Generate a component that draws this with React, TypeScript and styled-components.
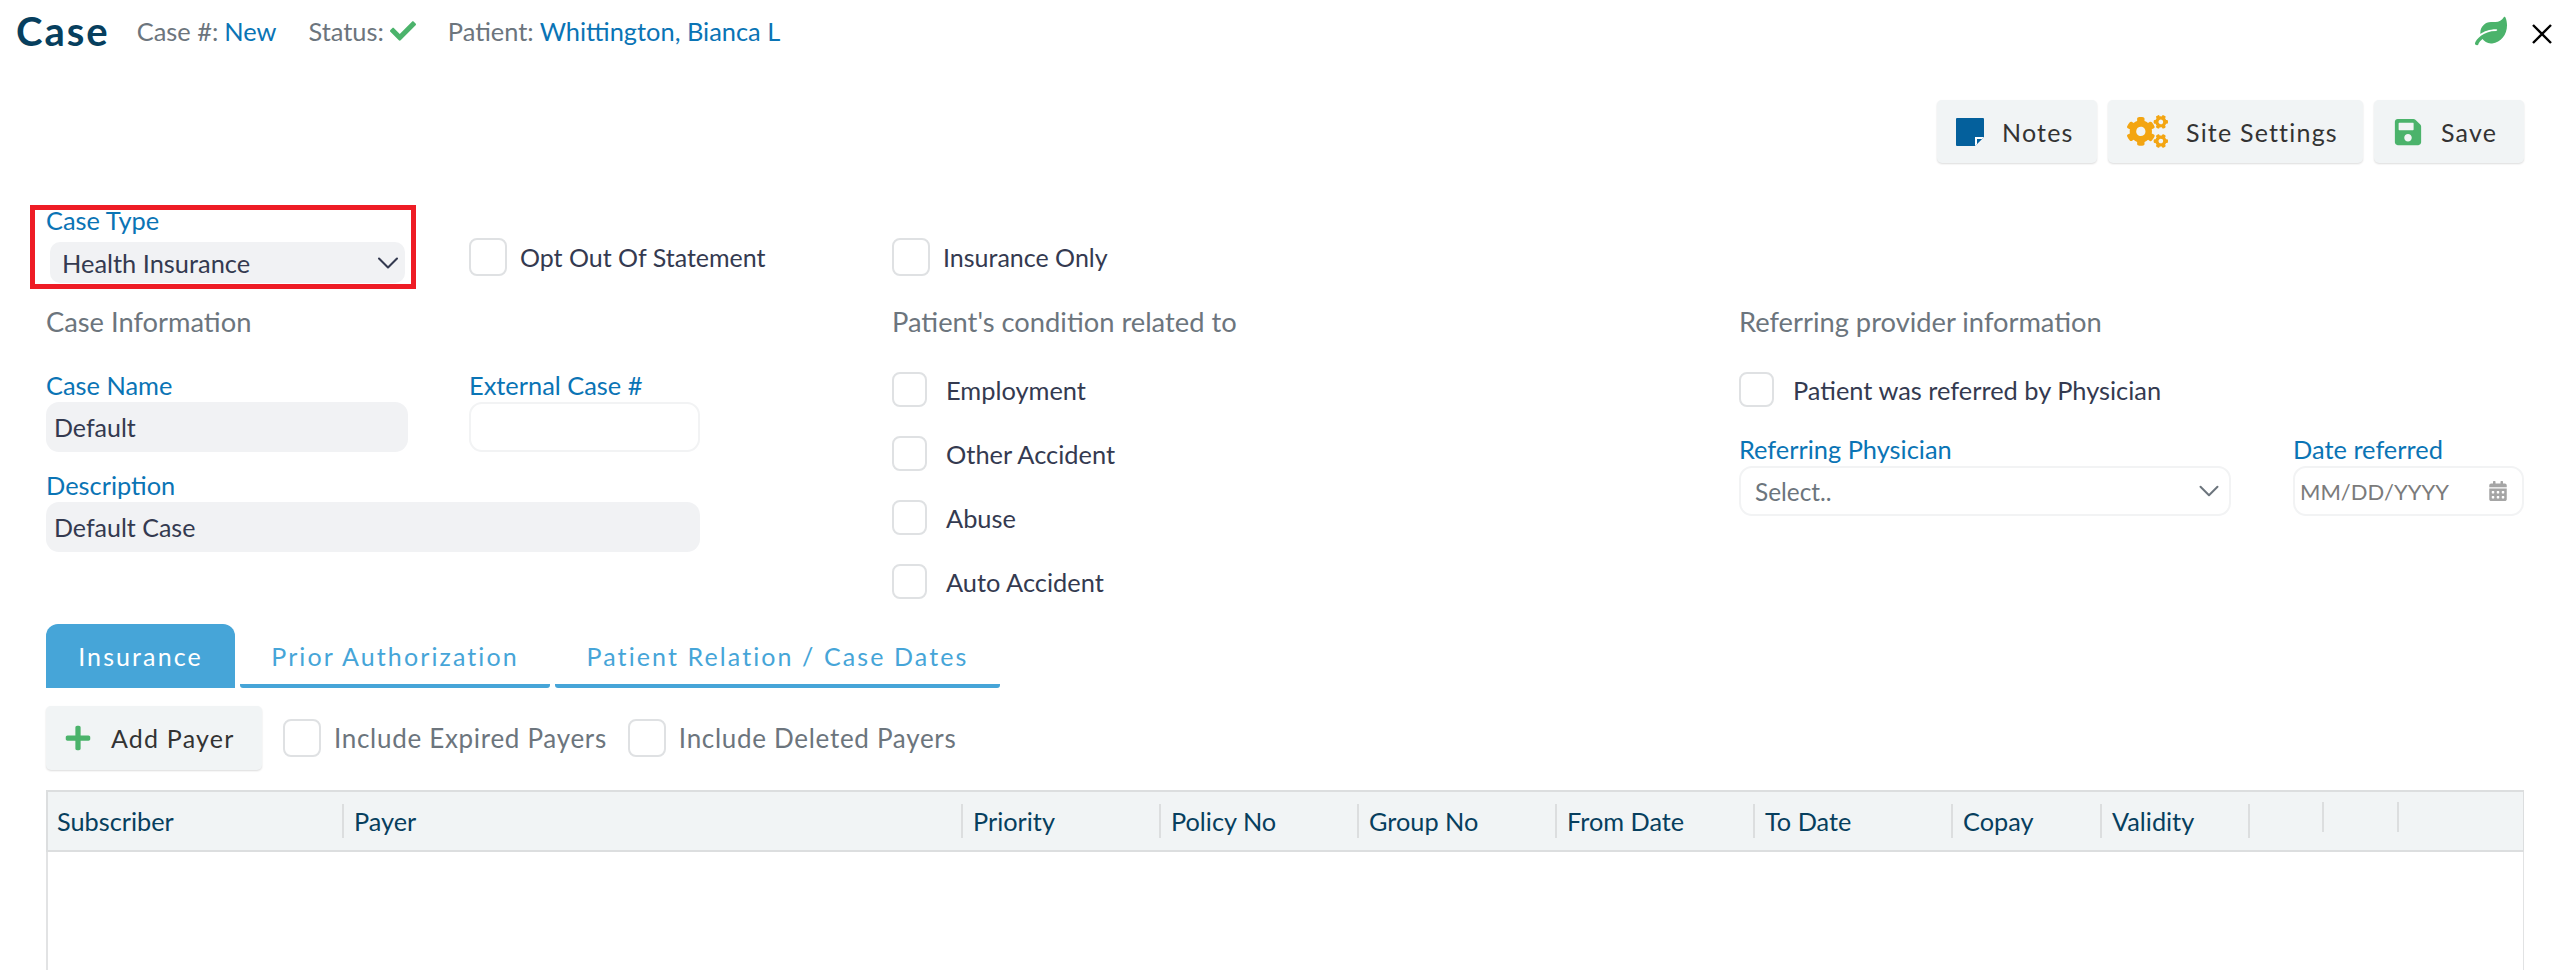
import { styled, createGlobalStyle } from 'styled-components';
import { FaCheck, FaLeaf, FaPlus, FaSave, FaCogs, FaCalendarAlt } from 'react-icons/fa';
import { LuChevronDown } from 'react-icons/lu';

const GlobalStyle = createGlobalStyle`
  html, body {
    margin: 0;
    height: 100%;
    background: #fff;
    overflow: hidden;
    font-family: 'Lato', 'Noto Sans', sans-serif;
  }
  *, *::before, *::after { box-sizing: border-box; }
`;

const columns = [
  { title: 'Subscriber', width: 298 },
  { title: 'Payer', width: 619 },
  { title: 'Priority', width: 198 },
  { title: 'Policy No', width: 198 },
  { title: 'Group No', width: 198 },
  { title: 'From Date', width: 198 },
  { title: 'To Date', width: 198 },
  { title: 'Copay', width: 149 },
  { title: 'Validity', width: 148 },
  { title: '', width: 74 },
  { title: '', width: 75 },
];

function NoteIcon() {
  return (
    <svg width="28" height="28" viewBox="0 0 28 28">
      <path d="M0 1a1 1 0 0 1 1-1h26a1 1 0 0 1 1 1v18l-9 9H1a1 1 0 0 1-1-1z" fill="#04609c" />
      <path d="M19 28v-9h9z" fill="#fff" />
      <path d="M21 26v-5h5z" fill="#04609c" />
    </svg>
  );
}

function Checkbox({ label, muted, compact }: { label: string; muted?: boolean; compact?: boolean }) {
  return (
    <CheckRow $compact={compact}>
      <Box $compact={compact} />
      <CheckLabel $muted={muted} $compact={compact}>{label}</CheckLabel>
    </CheckRow>
  );
}

export default function App() {
  return (
    <Page>
      <GlobalStyle />
      <Header>
        <Title>Case</Title>
        <Meta>
          Case #: <MetaValue>New</MetaValue>
        </Meta>
        <Meta>
          Status: <GreenCheck />
        </Meta>
        <Meta>
          Patient: <MetaValue>Whittington, Bianca L</MetaValue>
        </Meta>
        <HeaderRight>
          <FaLeaf color="#4bb36b" size={32} />
          <CloseIcon viewBox="0 0 20 20">
            <path d="M1 1l18 18M19 1L1 19" stroke="#000" strokeWidth="2.4" fill="none" />
          </CloseIcon>
        </HeaderRight>
      </Header>

      <Toolbar>
        <ActionButton $width={160}>
          <NoteIcon />
          Notes
        </ActionButton>
        <ActionButton $width={255}>
          <FaCogs color="#f3a512" size={41} />
          Site Settings
        </ActionButton>
        <ActionButton $width={150}>
          <FaSave color="#4bb36b" size={30} />
          Save
        </ActionButton>
      </Toolbar>

      <FormGrid>
        <TopCell>
          <CaseTypeField>
            <Label>Case Type</Label>
            <CaseTypeSelect>
              Health Insurance
              <SelectChevron size={36} strokeWidth={1.4} color="#343a50" />
            </CaseTypeSelect>
          </CaseTypeField>
          <TopCheck>
            <Checkbox label="Opt Out Of Statement" />
          </TopCheck>
        </TopCell>
        <TopCell>
          <TopCheck>
            <Checkbox label="Insurance Only" />
          </TopCheck>
        </TopCell>
        <TopCell />

        <Column>
          <SectionTitle>Case Information</SectionTitle>
          <FieldGrid>
            <Field>
              <Label>Case Name</Label>
              <Input $filled>Default</Input>
            </Field>
            <Field>
              <Label>External Case #</Label>
              <Input />
            </Field>
            <WideField>
              <Label>Description</Label>
              <Input $filled>Default Case</Input>
            </WideField>
          </FieldGrid>
        </Column>

        <Column>
          <SectionTitle>Patient's condition related to</SectionTitle>
          <CheckList>
            <Checkbox compact label="Employment" />
            <Checkbox compact label="Other Accident" />
            <Checkbox compact label="Abuse" />
            <Checkbox compact label="Auto Accident" />
          </CheckList>
        </Column>

        <Column>
          <SectionTitle>Referring provider information</SectionTitle>
          <CheckList>
            <Checkbox compact label="Patient was referred by Physician" />
            <ReferralRow>
              <Field>
                <Label>Referring Physician</Label>
                <Input>
                  <Placeholder>Select..</Placeholder>
                  <SelectChevron size={34} strokeWidth={1.4} color="#6c757d" />
                </Input>
              </Field>
              <Field>
                <Label>Date referred</Label>
                <DateInput>
                  <DatePlaceholder>MM/DD/YYYY</DatePlaceholder>
                  <FaCalendarAlt size={20} color="#a5a5a5" />
                </DateInput>
              </Field>
            </ReferralRow>
          </CheckList>
        </Column>
      </FormGrid>

      <Tabs>
        <Tab $active $width={189}>Insurance</Tab>
        <Tab $width={310}>Prior Authorization</Tab>
        <Tab $width={445}>Patient Relation / Case Dates</Tab>
      </Tabs>

      <PayerBar>
        <AddPayer>
          <FaPlus color="#4bb36b" size={28} />
          Add Payer
        </AddPayer>
        <Checkbox label="Include Expired Payers" muted />
        <Checkbox label="Include Deleted Payers" muted />
      </PayerBar>

      <PayerTable>
        <TableHead>
          {columns.map((col, i) => (
            <HeadCell key={i} $width={col.width} $first={i === 0} $short={col.title === ''}>
              {col.title}
            </HeadCell>
          ))}
          <HeadCell $short />
        </TableHead>
        <TableBody />
      </PayerTable>
    </Page>
  );
}

const Page = styled.div`
  width: 2567px;
  height: 970px;
  overflow: hidden;
  padding: 0 43px 0 46px;
`;

const Header = styled.div`
  height: 64px;
  margin: 0 -43px 0 -30px;
  padding: 0 15px 2px 0;
  display: flex;
  align-items: center;
`;

const Title = styled.div`
  font-size: 40px;
  font-weight: 700;
  letter-spacing: 2px;
  color: #073f5e;
  margin-right: 27px;
`;

const Meta = styled.div`
  font-size: 25.4px;
  color: #6c757d;
  margin-right: 32px;
  display: flex;
  align-items: center;
  gap: 6px;
`;

const MetaValue = styled.span`
  color: #0a74b5;
`;

const GreenCheck = styled(FaCheck)`
  color: #4bb36b;
  font-size: 26px;
`;

const HeaderRight = styled.div`
  margin-left: auto;
  display: flex;
  align-items: center;
  gap: 25px;
`;

const CloseIcon = styled.svg`
  width: 20px;
  height: 20px;
  margin-top: 6px;
`;

const Toolbar = styled.div`
  margin-top: 36px;
  display: flex;
  justify-content: flex-end;
  gap: 11px;
`;

const ActionButton = styled.div<{ $width: number }>`
  width: ${props => props.$width}px;
  height: 63px;
  padding-left: 19px;
  display: flex;
  align-items: center;
  gap: 18px;
  background: #f1f4f5;
  border-radius: 5px;
  box-shadow: 0 1px 2px rgba(0, 0, 0, 0.14);
  color: #333;
  font-size: 25px;
  letter-spacing: 1.2px;
`;

const FormGrid = styled.div`
  margin-top: 44px;
  display: grid;
  grid-template-columns: 846px 847px 1fr;
  grid-template-rows: 98px auto;
`;

const TopCell = styled.div`
  display: flex;
  align-items: flex-start;
`;

const CaseTypeField = styled.div`
  position: relative;
  width: 423px;

  &::after {
    content: '';
    position: absolute;
    left: -16px;
    top: -2px;
    width: 386px;
    height: 84px;
    border: 5px solid #ee1c25;
    pointer-events: none;
  }
`;

const Label = styled.div`
  height: 30px;
  line-height: 27px;
  font-size: 25.4px;
  color: #0a74b5;
`;

const CaseTypeSelect = styled.div`
  width: 355px;
  height: 41px;
  margin: 5px 0 0 4px;
  padding: 0 0 0 12px;
  display: flex;
  align-items: center;
  justify-content: space-between;
  background: #f1f2f4;
  border-radius: 10px;
  color: #343a50;
  font-size: 25.4px;
`;

const SelectChevron = styled(LuChevronDown)`
  flex: none;
  margin-right: -1px;
`;

const TopCheck = styled.div`
  margin-top: 31px;
`;

const CheckRow = styled.div<{ $compact?: boolean }>`
  display: flex;
  align-items: center;
  gap: ${props => (props.$compact ? '19px' : '13px')};
  height: ${props => (props.$compact ? '35px' : '38px')};
`;

const Box = styled.div<{ $compact?: boolean }>`
  width: ${props => (props.$compact ? '35px' : '38px')};
  height: ${props => (props.$compact ? '35px' : '38px')};
  border: 2px solid #dfe1e3;
  border-radius: 8px;
  background: #fff;
`;

const CheckLabel = styled.span<{ $muted?: boolean; $compact?: boolean }>`
  font-size: ${props => (props.$muted ? '26px' : props.$compact ? '25.4px' : '25px')};
  letter-spacing: ${props => (props.$muted ? '0.7px' : '0')};
  color: ${props => (props.$muted ? '#6c757d' : '#343a50')};
`;

const Column = styled.div`
  display: flex;
  flex-direction: column;
`;

const SectionTitle = styled.div`
  height: 34px;
  line-height: 34px;
  margin-bottom: 33px;
  font-size: 27.3px;
  color: #6c757d;
`;

const FieldGrid = styled.div`
  width: 654px;
  display: grid;
  grid-template-columns: 362px 231px;
  justify-content: space-between;
  row-gap: 20px;
`;

const Field = styled.div`
  min-width: 0;
`;

const WideField = styled(Field)`
  grid-column: 1 / -1;
`;

const Input = styled.div<{ $filled?: boolean }>`
  height: 50px;
  padding: 0 4px 0 8px;
  display: flex;
  align-items: center;
  justify-content: space-between;
  border-radius: 13px;
  background: ${props => (props.$filled ? '#f1f2f4' : '#fff')};
  border: ${props => (props.$filled ? 'none' : '2px solid #f2f3f4')};
  color: #343a50;
  font-size: 25px;
`;

const DateInput = styled(Input)`
  padding: 0 14px 0 5px;
`;

const Placeholder = styled.span`
  color: #6c757d;
  font-size: 24.4px;
  margin-left: 6px;
`;

const DatePlaceholder = styled.span`
  color: #7b7b7b;
  font-size: 22px;
`;

const CheckList = styled.div`
  display: flex;
  flex-direction: column;
  gap: 29px;
`;

const ReferralRow = styled.div`
  display: grid;
  grid-template-columns: 492px 231px;
  justify-content: space-between;
`;

const Tabs = styled.div`
  margin-top: 25px;
  display: flex;
  gap: 5px;
`;

const Tab = styled.div<{ $active?: boolean; $width: number }>`
  width: ${props => props.$width}px;
  height: 64px;
  display: flex;
  align-items: center;
  justify-content: center;
  padding-top: 4px;
  font-size: 25px;
  letter-spacing: 2.1px;
  color: ${props => (props.$active ? '#fff' : '#46a5d8')};
  background: ${props => (props.$active ? '#46a5d8' : '#fff')};
  border-bottom: 4px solid #46a5d8;
  border-radius: ${props => (props.$active ? '12px 12px 0 0' : '0 0 3px 3px')};
`;

const PayerBar = styled.div`
  margin-top: 18px;
  height: 64px;
  display: flex;
  align-items: center;
  gap: 21px;
`;

const AddPayer = styled.div`
  width: 216px;
  height: 64px;
  padding-left: 18px;
  display: flex;
  align-items: center;
  gap: 19px;
  background: #f1f4f5;
  border-radius: 5px;
  box-shadow: 0 1px 2px rgba(0, 0, 0, 0.14);
  color: #333;
  font-size: 25px;
  letter-spacing: 1.2px;
`;

const PayerTable = styled.div`
  margin-top: 20px;
`;

const TableHead = styled.div`
  height: 62px;
  display: flex;
  align-items: center;
  background: #f1f4f5;
  border-top: 2px solid #dcdedf;
  border-bottom: 2px solid #dcdedf;
  border-left: 2px solid #dcdedf;
  border-right: 1px solid #dcdedf;
`;

const HeadCell = styled.div<{ $width?: number; $first?: boolean; $short?: boolean }>`
  flex: ${props => (props.$width ? `0 0 ${props.$width - (props.$first ? 2 : 0)}px` : '1')};
  height: ${props => (props.$short ? '30px' : '34px')};
  align-self: ${props => (props.$short ? 'flex-start' : 'center')};
  margin-top: ${props => (props.$short ? '10px' : '0')};
  line-height: 34px;
  padding-left: ${props => (props.$first ? '9px' : '10px')};
  font-size: 25.3px;
  color: #073f5e;
  border-right: ${props => (props.$width ? '2px solid #dcdedf' : 'none')};
  white-space: nowrap;
`;

const TableBody = styled.div`
  height: 120px;
  border-left: 2px solid #e2e3e4;
  border-right: 1px solid #e2e3e4;
  background: #fff;
`;
